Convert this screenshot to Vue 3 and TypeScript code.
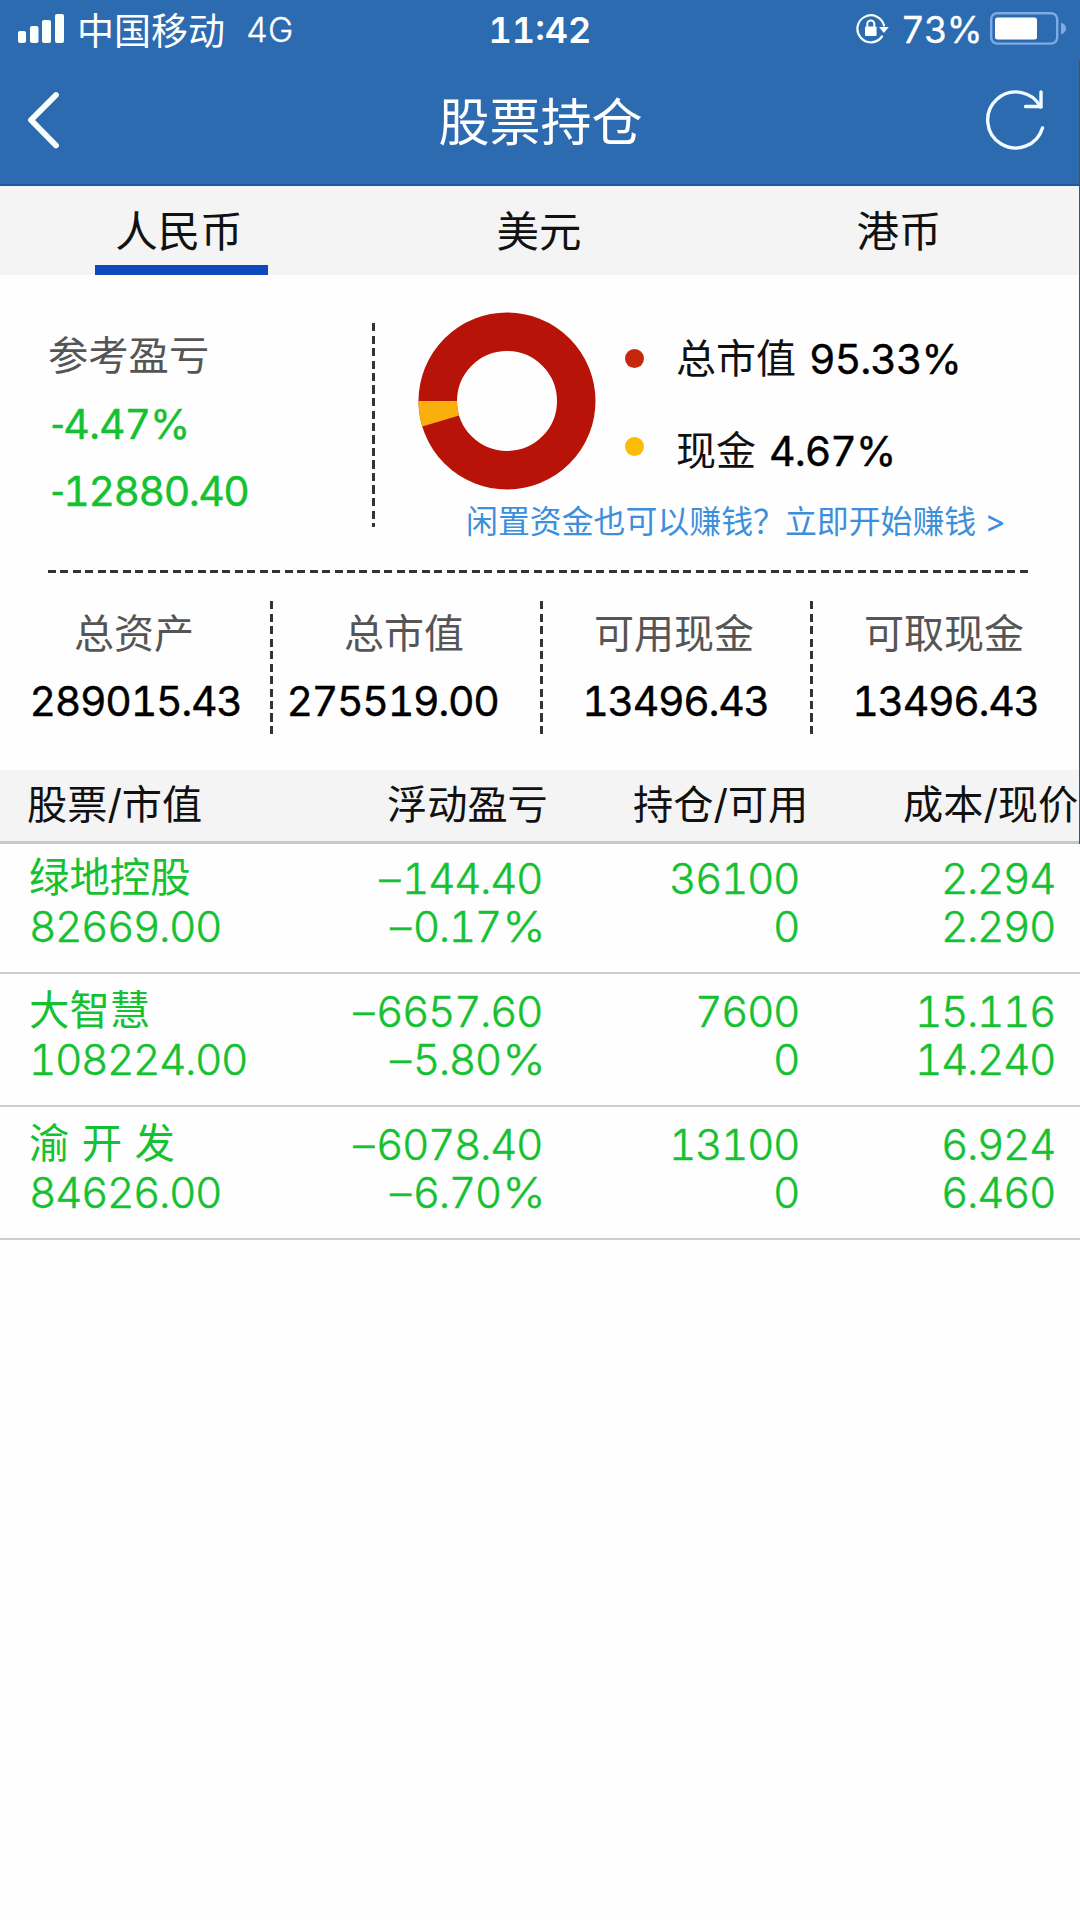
<script setup lang="ts">
interface Total {
  label: string
  value: string
}

interface Holding {
  name: string
  marketValue: string
  profit: string
  profitRate: string
  amount: string
  available: string
  cost: string
  price: string
}

const tabs: string[] = ['人民币', '美元', '港币']
const activeTab = 0

const totals: Total[] = [
  { label: '总资产', value: '289015.43' },
  { label: '总市值', value: '275519.00' },
  { label: '可用现金', value: '13496.43' },
  { label: '可取现金', value: '13496.43' },
]

const holdings: Holding[] = [
  { name: '绿地控股', marketValue: '82669.00', profit: '144.40', profitRate: '0.17', amount: '36100', available: '0', cost: '2.294', price: '2.290' },
  { name: '大智慧', marketValue: '108224.00', profit: '6657.60', profitRate: '5.80', amount: '7600', available: '0', cost: '15.116', price: '14.240' },
  { name: '渝 开 发', marketValue: '84626.00', profit: '6078.40', profitRate: '6.70', amount: '13100', available: '0', cost: '6.924', price: '6.460' },
]
</script>

<template>
  <div class="screen">
    <header class="top">
      <div class="status">
        <div class="status-left">
          <svg class="signal" width="46" height="29" viewBox="0 0 46 29">
            <rect x="0" y="17" width="8" height="12" rx="2" />
            <rect x="12" y="12" width="8.500" height="17" rx="2" />
            <rect x="24" y="6" width="9" height="23" rx="2" />
            <rect x="37" y="0" width="9" height="29" rx="2" />
          </svg>
          <span class="carrier">中国移动</span>
          <span class="network">4G</span>
        </div>
        <div class="clock">11:42</div>
        <div class="status-right">
          <svg class="lock" width="34" height="30" viewBox="0 0 34 30">
            <path d="M26 22.500A13.500 13.500 0 1 1 28 11.500" fill="none" stroke="#f4fcff" stroke-width="2.200" stroke-linecap="round" />
            <path d="M23 13h9.800l-4.900 6z" fill="#f4fcff" />
            <rect x="9" y="12.500" width="11.600" height="9.500" rx="1" fill="#fff" />
            <path d="M11.300 13v-3a3.500 3.500 0 0 1 7 0v3" fill="none" stroke="#fff" stroke-width="2" />
          </svg>
          <span class="percent">73%</span>
          <svg class="battery" width="78" height="33" viewBox="0 0 78 33">
            <rect x="1.200" y="1.200" width="66" height="30.400" rx="6" fill="none" stroke="#7eaae6" stroke-width="2.400" />
            <rect x="5" y="5.500" width="42" height="22" rx="2.500" fill="#fff" />
            <path d="M71 10.500c3 1 5 3 5 6s-2 5-5 6z" fill="#7eaae6" />
          </svg>
        </div>
      </div>
      <div class="nav">
        <svg class="back" width="36" height="60" viewBox="0 0 36 60">
          <path d="M31 5L6 30L31 55.500" fill="none" stroke="#fafffc" stroke-width="5.800" stroke-linecap="round" stroke-linejoin="round" />
        </svg>
        <h1>股票持仓</h1>
        <svg class="refresh" width="62" height="62" viewBox="0 0 62 62">
          <path d="M56.500 19A28 28 0 1 0 58.500 40" fill="none" stroke="#f0fcff" stroke-width="3.400" stroke-linecap="round" />
          <path d="M57 4V18.500H41.500" fill="none" stroke="#f0fcff" stroke-width="3.400" stroke-linecap="round" />
        </svg>
      </div>
    </header>

    <nav class="tabs">
      <div v-for="(tab, i) in tabs" :key="tab" class="tab" :class="{ active: i === activeTab }">{{ tab }}</div>
    </nav>

    <section class="overview">
      <div class="profit">
        <div class="profit-label">参考盈亏</div>
        <div class="profit-rate"><span class="hyphen">-</span>4.47%</div>
        <div class="profit-value"><span class="hyphen">-</span>12880.40</div>
      </div>
      <div class="divider"></div>
      <div class="assets">
        <div class="chart">
          <svg class="donut" width="178" height="178" viewBox="-89 -89 178 178">
            <circle r="69.250" fill="none" stroke="#b71309" stroke-width="38.500" />
            <path d="M-88.500 0A88.500 88.500 0 0 0 -84.700 25.600L-47.900 14.500A50 50 0 0 1 -50 0z" fill="#f9b00d" />
          </svg>
          <div class="legend">
            <div class="legend-row"><i class="dot red"></i><span>总市值</span><b>95.33%</b></div>
            <div class="legend-row second"><i class="dot yellow"></i><span>现金</span><b>4.67%</b></div>
          </div>
        </div>
        <div class="promo">闲置资金也可以赚钱？立即开始赚钱<span>&gt;</span></div>
      </div>
    </section>

    <div class="rule"></div>

    <section class="totals">
      <div v-for="(item, i) in totals" :key="item.label" class="total" :class="`total-${i}`">
        <div class="total-label">{{ item.label }}</div>
        <div class="total-value">{{ item.value }}</div>
      </div>
    </section>

    <div class="table-head">
      <div class="head-cell">股票/市值</div>
      <div class="head-cell">浮动盈亏</div>
      <div class="head-cell">持仓/可用</div>
      <div class="head-cell">成本/现价</div>
    </div>
    <div class="rows">
      <div v-for="row in holdings" :key="row.name" class="row">
        <div class="cell name-cell"><span class="name">{{ row.name }}</span><span>{{ row.marketValue }}</span></div>
        <div class="cell"><span><i class="dash">–</i>{{ row.profit }}</span><span><i class="dash">–</i>{{ row.profitRate }}<i class="unit">%</i></span></div>
        <div class="cell"><span>{{ row.amount }}</span><span>{{ row.available }}</span></div>
        <div class="cell"><span>{{ row.cost }}</span><span>{{ row.price }}</span></div>
      </div>
    </div>
  </div>
</template>

<style>
body {
  margin: 0;
  background: #fefefe;
}
</style>

<style scoped>
* {
  box-sizing: border-box;
}

.screen {
  position: relative;
  width: 1080px;
  height: 1920px;
  overflow: hidden;
  background: #fefefe;
  font-family: Inter, "Noto Sans CJK SC", sans-serif;
  font-feature-settings: "tnum";
  color: #111;
  white-space: nowrap;
}

.screen::after {
  content: "";
  position: absolute;
  top: 60px;
  right: 0;
  width: 1px;
  height: 784px;
  background: #47525f;
}

svg {
  display: block;
  flex: none;
}

.top {
  height: 186px;
  background: #2c6bb0;
  border-bottom: 2px solid #1f5a9f;
  color: #fff;
}

.status {
  display: grid;
  grid-template-columns: 1fr auto 1fr;
  height: 60px;
}

.status-left,
.status-right {
  display: flex;
  height: 60px;
  line-height: 60px;
}

.signal {
  margin: 14px 0 0 18px;
  fill: #fafffa;
}

.carrier {
  margin: 2px 0 0 13px;
  font-size: 37px;
}

.network {
  margin-left: 21px;
  font-size: 34px;
  font-weight: 300;
  -webkit-text-stroke: 0.300px currentColor;
}

.clock {
  font-size: 36px;
  font-weight: 600;
  line-height: 60px;
}

.status-right {
  justify-content: flex-end;
}

.lock {
  margin: 14px 11px 0 0;
}

.percent {
  font-size: 36.500px;
  letter-spacing: -0.700px;
  -webkit-text-stroke: 0.300px currentColor;
}

.battery {
  margin: 12px 12px 0 8px;
}

.nav {
  display: flex;
  justify-content: space-between;
  height: 124px;
}

.back {
  margin: 30px 0 0 25px;
}

h1 {
  margin: 26px 0 0 36px;
  font-size: 51px;
  font-weight: 400;
  line-height: 74px;
}

.refresh {
  margin: 28px 34px 0 0;
}

.tabs {
  display: grid;
  grid-template-columns: repeat(3, 360px);
  height: 89px;
  background: #f4f4f4;
  border-top: 2px solid #eef5fb;
}

.tab {
  display: flex;
  flex-direction: column;
  align-items: center;
  margin-left: -2px;
  font-size: 42.500px;
  line-height: 87px;
}

.tab.active::after {
  content: "";
  width: 173px;
  height: 10px;
  margin: -10px 0 0 5px;
  background: #0f49bd;
}

.overview {
  display: flex;
  height: 295px;
}

.profit {
  width: 371px;
  padding: 44px 0 0 48px;
}

.profit-label {
  height: 70px;
  font-size: 40.300px;
  line-height: 73px;
  color: #555;
}

.profit-rate,
.profit-value {
  padding-left: 4px;
  font-size: 41px;
  line-height: 70px;
  letter-spacing: -1px;
  color: #14c130;
  -webkit-text-stroke: 0.400px currentColor;
}

.profit-value {
  line-height: 62px;
  letter-spacing: -1.500px;
}

.hyphen {
  font-family: Roboto, sans-serif;
  letter-spacing: 0;
}

.divider {
  width: 3px;
  height: 204px;
  margin: 48px 0 0 1px;
  background: repeating-linear-gradient(to bottom, #333 0 8px, transparent 8px 12.500px);
}

.assets {
  flex: 1;
}

.chart {
  display: flex;
  height: 223px;
  padding-left: 43px;
}

.donut {
  margin-top: 37px;
}

.legend {
  padding: 38px 0 0 29px;
}

.legend-row {
  display: flex;
  align-items: center;
  height: 90px;
  font-size: 40px;
  line-height: 50px;
}

.legend-row.second {
  height: 94px;
}

.legend-row span {
  margin-top: 2px;
}

.dot {
  width: 19px;
  height: 19px;
  margin-right: 32px;
  border-radius: 50%;
}

.second .dot {
  margin-top: -7px;
}

.red {
  background: #c6270b;
}

.yellow {
  background: #fabc05;
}

.legend b {
  margin: 1px 0 0 13px;
  font-size: 41px;
  font-weight: 400;
  letter-spacing: -0.950px;
  color: #000;
  -webkit-text-stroke: 0.400px currentColor;
}

.promo {
  padding-left: 91px;
  font-size: 31.900px;
  line-height: 48px;
  color: #3d8fdc;
}

.promo span {
  margin-left: 9px;
}

.rule {
  width: 982px;
  height: 3px;
  margin-left: 48px;
  background: repeating-linear-gradient(to right, #333 0 8px, transparent 8px 12.460px);
}

.totals {
  display: grid;
  grid-template-columns: repeat(4, 270px);
  height: 133px;
  margin-top: 28px;
}

.total {
  text-align: center;
  background: repeating-linear-gradient(to bottom, #333 0 8px, transparent 8px 12.500px) left / 3px 100% no-repeat;
}

.total-0 {
  background: none;
}

.total-label {
  height: 64px;
  margin-left: -2px;
  font-size: 40px;
  line-height: 66px;
  color: #555;
}

.total-value {
  padding-left: 1px;
  font-size: 41px;
  line-height: 73px;
  letter-spacing: -1.300px;
  color: #000;
  -webkit-text-stroke: 0.400px currentColor;
}

.total-1 .total-value {
  margin-left: -26px;
}

.table-head {
  display: grid;
  grid-template-columns: 360px 246px 270px 204px;
  height: 74px;
  margin-top: 36px;
  background: #f4f4f4;
  border-bottom: 3px solid #c8c8c8;
  font-size: 40.200px;
  line-height: 69px;
}

.head-cell {
  padding-left: 27px;
}

.rows {
  margin-top: -3px;
}

.row {
  display: grid;
  grid-template-columns: 300px 242px 257px 256px;
  height: 133px;
  padding-top: 14px;
  border-bottom: 2px solid #cdcdcd;
  font-size: 42.500px;
  font-weight: 300;
  letter-spacing: -1.500px;
  color: #14c130;
  -webkit-text-stroke: 0.450px currentColor;
}

.cell {
  display: flex;
  flex-direction: column;
  line-height: 48px;
  text-align: right;
}

.name-cell {
  padding-left: 29px;
  text-align: left;
}

.name {
  margin-top: -1px;
  margin-bottom: 1px;
  font-size: 40.400px;
  font-weight: 400;
  letter-spacing: 0;
  word-spacing: 1.500px;
  -webkit-text-stroke: 0;
}

.dash {
  margin-right: 3px;
  font-style: normal;
}

.unit {
  display: inline-block;
  margin-left: 3px;
  font-style: normal;
  transform: scaleX(1.080);
}
</style>
